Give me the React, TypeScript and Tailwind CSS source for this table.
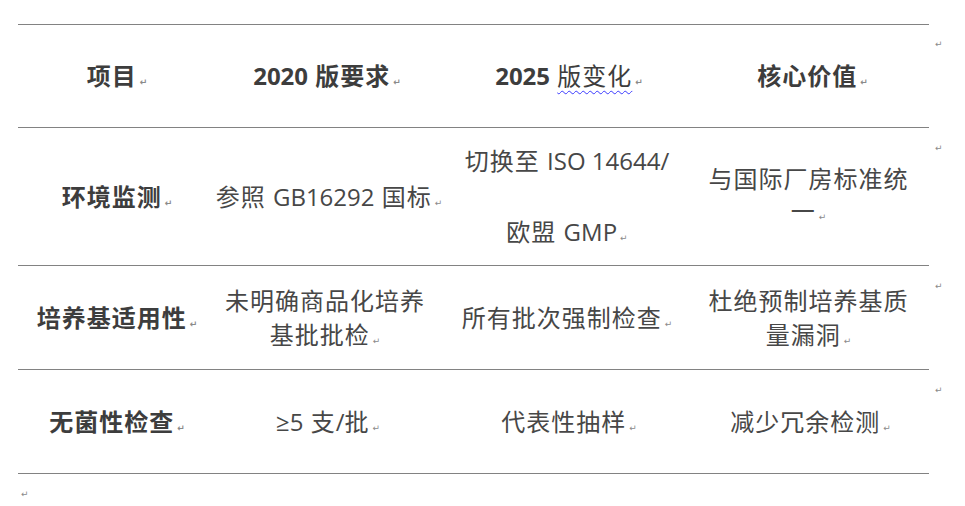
import React from "react";

const Mark = () => (
  <span className="ml-[3px] align-baseline text-[9px] leading-none text-[#8a8a8a] tracking-normal" style={{ fontFamily: '"DejaVu Sans", sans-serif' }}>
    ↵
  </span>
);

const RowMark = () => (
  <div className="w-[20px] pl-[6px] pt-[16px] text-[9px] leading-none text-[#8a8a8a]" style={{ fontFamily: '"DejaVu Sans", sans-serif' }}>
    ↵
  </div>
);

const L = ({ children }: { children: React.ReactNode }) => <span className="tracking-normal">{children}</span>;

const Cell = ({ children, className = "" }: { children: React.ReactNode; className?: string }) => (
  <div className={"flex flex-col items-center justify-center whitespace-nowrap px-[6px] text-center " + className}>{children}</div>
);

export default function App() {
  const font = { fontFamily: '"Open Sans", "Noto Sans CJK SC", sans-serif' };
  return (
    <div className="h-[506px] w-[965px] bg-white text-[#474747]" style={font}>
      <div className="pt-[24px] pl-[18px]">
        <div className="w-[931px]">
          {/* Header */}
          <div className="flex">
            <div className="grid h-[104px] w-[911px] grid-cols-[186px_242px_242px_241px] border-y border-[#828282] text-[24px] tracking-[1px] font-bold text-[#3d3d3d]">
              <Cell className="pl-[18px]">
                <div>项目<Mark /></div>
              </Cell>
              <Cell className="pl-[10px]">
                <div><L>2020</L> 版要求<Mark /></div>
              </Cell>
              <Cell className="pl-[10px]">
                <div>
                  <L>2025</L>{" "}
                  <span className="font-normal underline decoration-wavy decoration-[#3a3aff] decoration-1 underline-offset-[5px]">版变化</span>
                  <Mark />
                </div>
              </Cell>
              <Cell className="pl-[14px]">
                <div>核心价值<Mark /></div>
              </Cell>
            </div>
            <RowMark />
          </div>
          {/* Row 2 */}
          <div className="flex">
            <div className="grid h-[138px] w-[911px] grid-cols-[186px_242px_242px_241px] border-b border-[#828282] text-[24px] tracking-[1px]">
              <Cell className="font-bold text-[#3d3d3d] pl-[18px]">
                <div>环境监测<Mark /></div>
              </Cell>
              <Cell className="pl-[14px]">
                <div>参照 <L>GB16292</L> 国标<Mark /></div>
              </Cell>
              <Cell className="gap-[39px]">
                <div className="leading-[32px]">切换至 <L>ISO 14644/</L></div>
                <div className="leading-[32px]">欧盟 <L>GMP</L><Mark /></div>
              </Cell>
              <Cell className="pb-[4px]">
                <div className="leading-[32px]">与国际厂房标准统</div>
                <div className="leading-[32px]">一<Mark /></div>
              </Cell>
            </div>
            <RowMark />
          </div>
          {/* Row 3 */}
          <div className="flex">
            <div className="grid h-[104px] w-[911px] grid-cols-[186px_242px_242px_241px] border-b border-[#828282] text-[24px] tracking-[1px]">
              <Cell className="font-bold text-[#3d3d3d] pl-[18px]">
                <div>培养基适用性<Mark /></div>
              </Cell>
              <Cell>
                <div className="leading-[34px]">未明确商品化培养</div>
                <div className="leading-[34px]">基批批检<Mark /></div>
              </Cell>
              <Cell>
                <div>所有批次强制检查<Mark /></div>
              </Cell>
              <Cell>
                <div className="leading-[34px]">杜绝预制培养基质</div>
                <div className="leading-[34px]">量漏洞<Mark /></div>
              </Cell>
            </div>
            <RowMark />
          </div>
          {/* Row 4 */}
          <div className="flex">
            <div className="grid h-[104px] w-[911px] grid-cols-[186px_242px_242px_241px] border-b border-[#828282] text-[24px] tracking-[1px]">
              <Cell className="font-bold text-[#3d3d3d] pl-[18px]">
                <div>无菌性检查<Mark /></div>
              </Cell>
              <Cell className="pl-[12px]">
                <div><L>≥5</L> 支<L>/</L>批<Mark /></div>
              </Cell>
              <Cell className="pl-[10px]">
                <div>代表性抽样<Mark /></div>
              </Cell>
              <Cell className="pl-[10px]">
                <div>减少冗余检测<Mark /></div>
              </Cell>
            </div>
            <RowMark />
          </div>
        </div>
        <div className="pt-[16px] pl-[3px] text-[9px] leading-none text-[#8a8a8a]" style={{ fontFamily: '"DejaVu Sans", sans-serif' }}>
          ↵
        </div>
      </div>
    </div>
  );
}
